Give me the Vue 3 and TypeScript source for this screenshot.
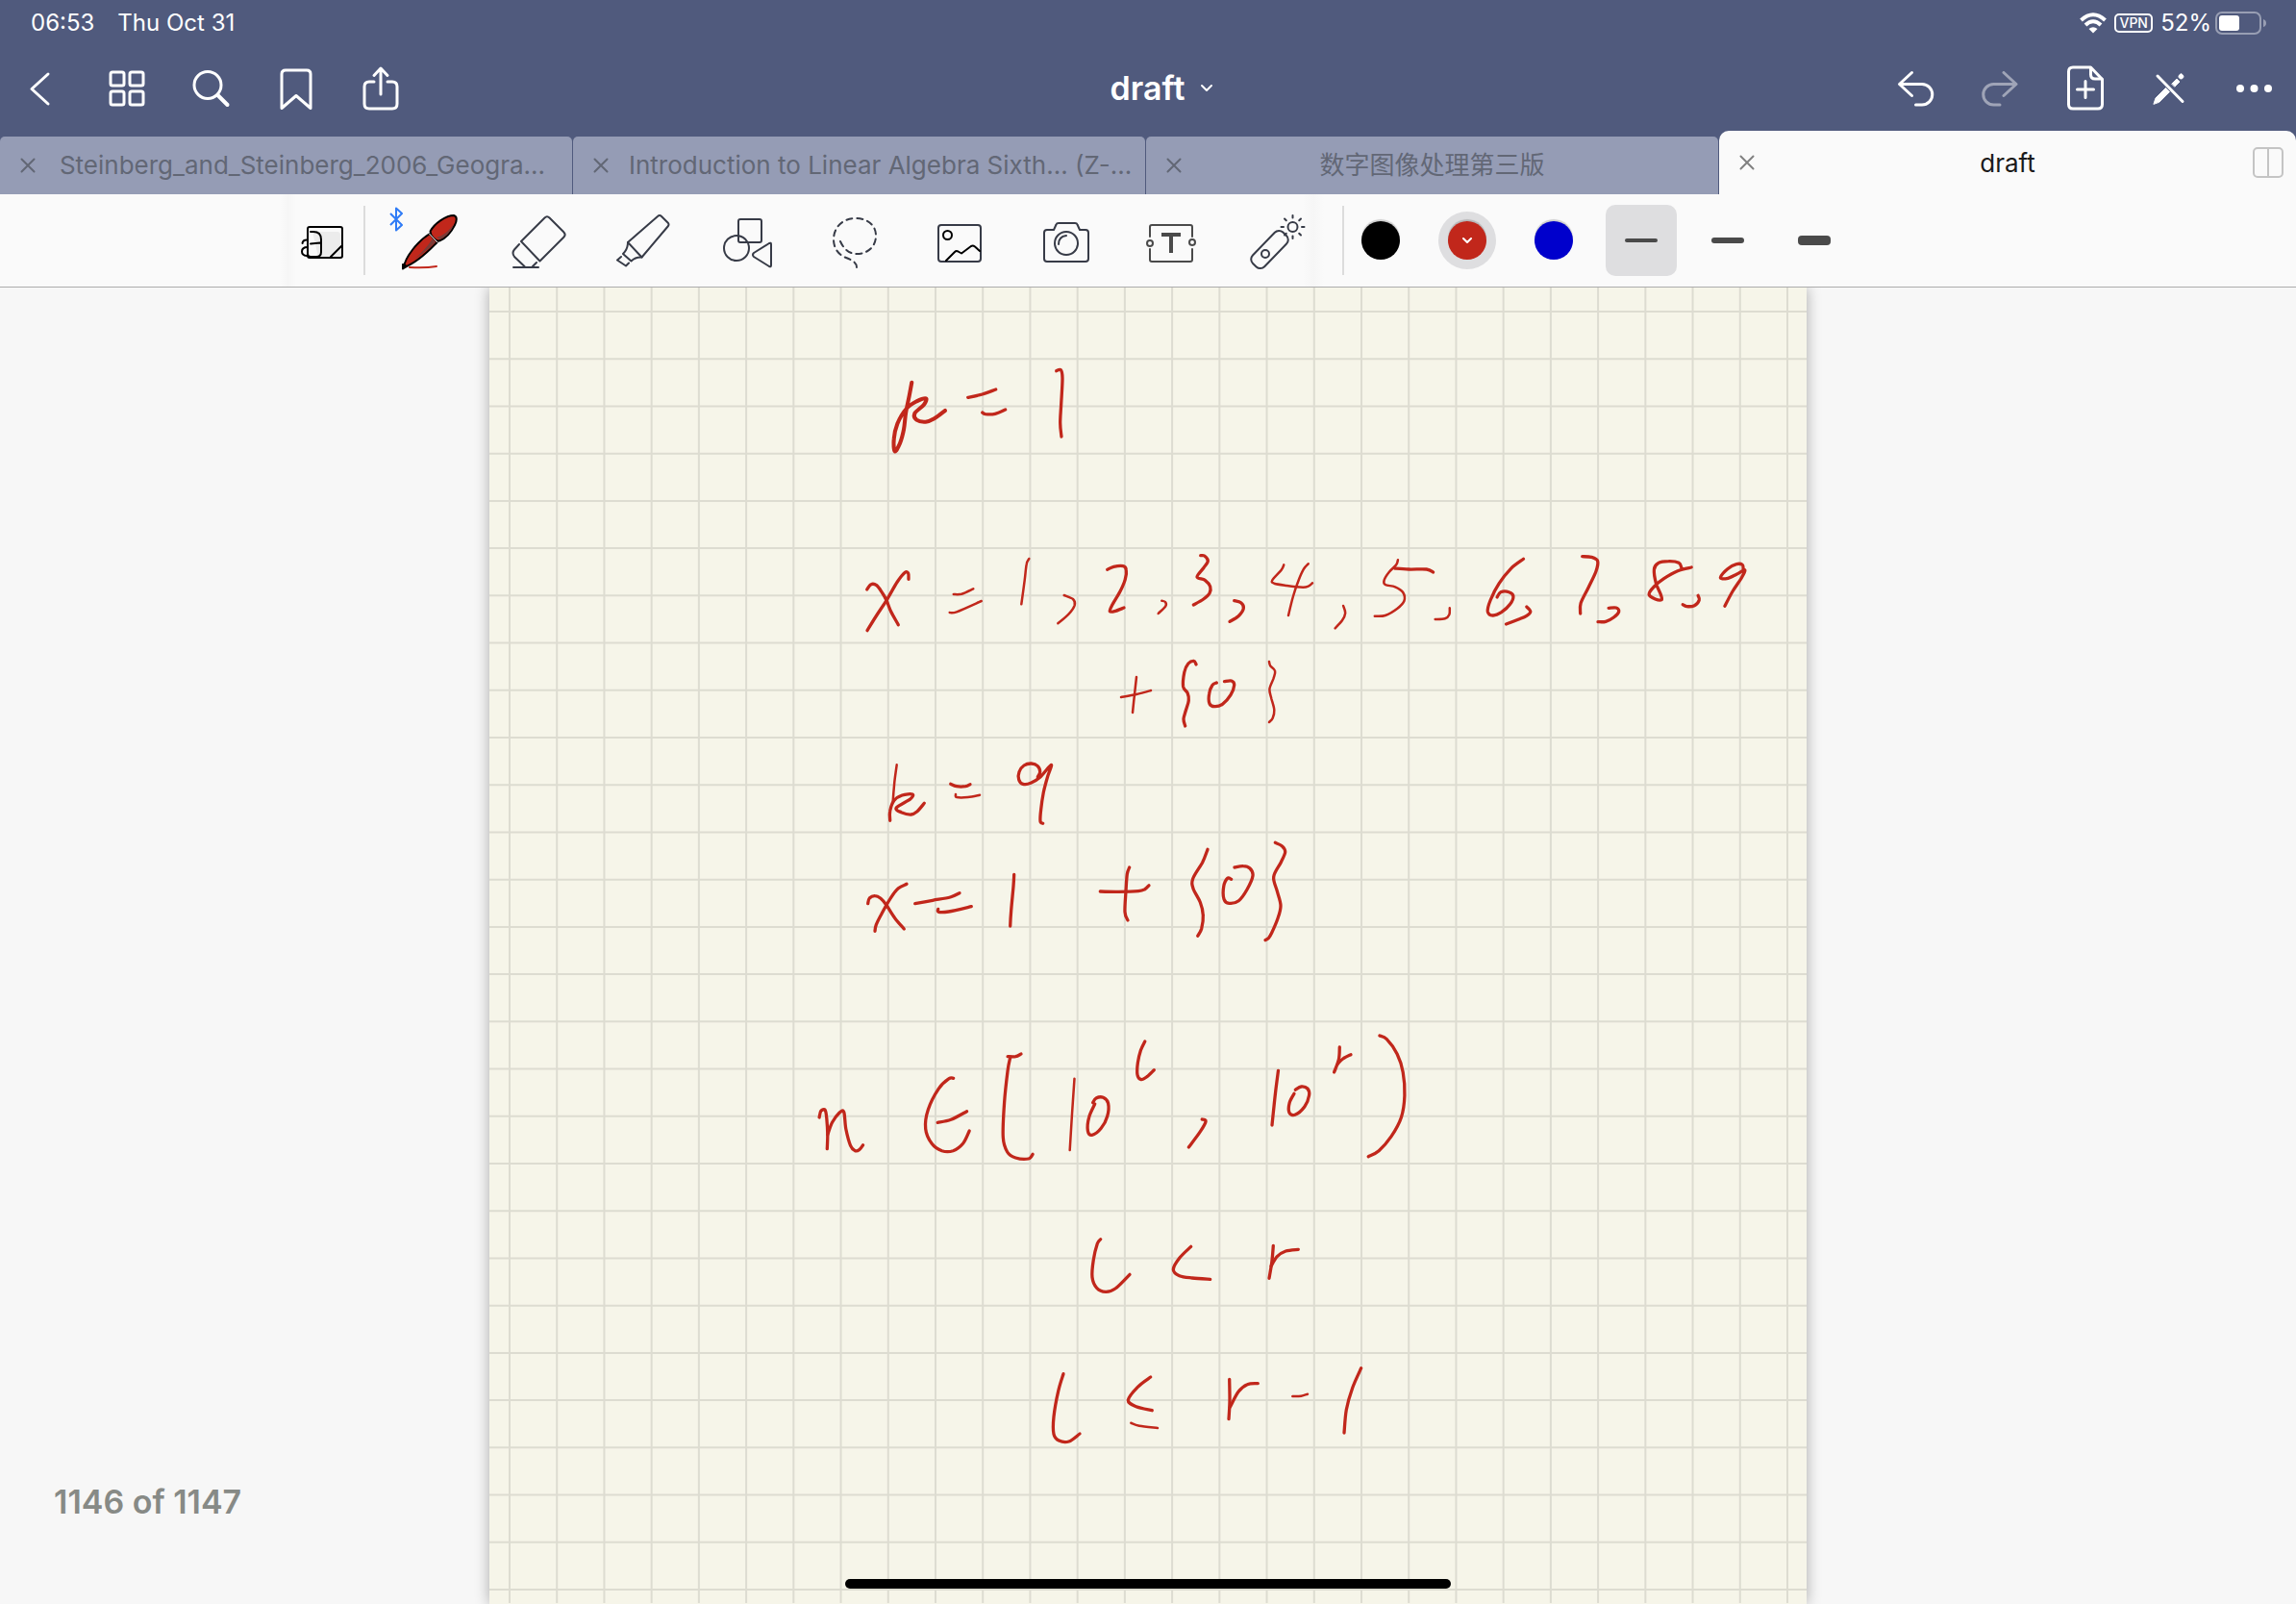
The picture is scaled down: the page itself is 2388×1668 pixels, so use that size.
<script setup lang="ts">
interface Tab {
  title: string
  active?: boolean
  long?: boolean
}

interface InkLine {
  label: string
  // origin of the line on the sheet, and samples per pixel on each axis
  x: number
  y: number
  sx: number
  sy: number
  // every stroke: pen pressure, then x and y of each sample
  strokes: number[][]
}

const tabs: Tab[] = [
  { title: 'Steinberg_and_Steinberg_2006_Geogra...', long: true },
  { title: 'Introduction to Linear Algebra Sixth... (Z-...', long: true },
  { title: '数字图像处理第三版' },
  { title: 'draft', active: true },
]

const colors = [
  { name: 'Black', value: '#000000', selected: false },
  { name: 'Red', value: '#c1271b', selected: true },
  { name: 'Blue', value: '#0000cc', selected: false },
]

const widths = [
  { name: 'Thin', px: 4, selected: true },
  { name: 'Medium', px: 6, selected: false },
  { name: 'Thick', px: 10, selected: false },
]

const rays = [0, 45, 90, 135, 180, 225, 270, 315]

const pitch = 443 / 9
const gridX = Array.from({ length: 28 }, (_, i) => 21 + i * pitch)
const gridY = Array.from({ length: 28 }, (_, i) => 25 + i * pitch)

const ink: InkLine[] = [
  {
    label: 'k = 1, x = 1, 2, 3, 4', x: 371, y: 51, sx: 3, sy: 3,
    strokes: [
      [4, 205, 143, 197, 185, 186, 240, 180, 290, 168, 333, 152, 358, 149, 320, 160, 272, 188, 225, 220, 202, 249, 193, 243, 212, 214, 240, 220, 260, 248, 266, 275, 256, 309, 231],
      [3, 380, 190, 425, 180, 467, 165],
      [3, 425, 237, 435, 242, 465, 241, 497, 228],
      [3, 656, 107, 670, 104, 675, 130, 671, 210, 668, 270, 672, 312],
      [3, 65, 789, 78, 773, 95, 776, 112, 798, 126, 823, 140, 858, 163, 899],
      [3, 66, 917, 95, 870, 126, 823, 160, 765, 184, 736, 194, 739, 195, 757],
      [2, 335, 804, 360, 803, 397, 787],
      [2, 323, 861, 345, 859, 422, 825],
      [2, 571, 693, 563, 710, 557, 760, 547, 835],
      [2, 680, 807, 708, 819, 713, 838, 695, 865, 661, 895],
      [3, 815, 727, 835, 718, 865, 716, 874, 728, 871, 757, 855, 795, 830, 838, 823, 857, 838, 857, 867, 846],
      [2, 985, 824, 996, 828, 997, 841, 974, 864],
      [3, 1106, 683, 1118, 684, 1129, 700, 1115, 722, 1095, 750, 1120, 760, 1136, 780, 1134, 801, 1115, 819, 1084, 837],
      [3, 1211, 824, 1232, 830, 1240, 848, 1224, 872, 1197, 889],
      [2, 1366, 712, 1358, 728, 1330, 760, 1336, 770, 1375, 777, 1425, 782, 1442, 779, 1455, 769],
      [2, 1442, 709, 1428, 725, 1412, 760, 1395, 810, 1380, 870],
    ],
  },
  {
    label: ', 5, 6, 7, 8, 9 {0}', x: 691, y: 251, sx: 2.45, sy: 3,
    strokes: [
      [2, 483, 240, 488, 263, 480, 286, 462, 310],
      [2, 622, 97, 618, 112, 600, 134, 587, 160, 590, 174, 615, 181, 635, 198, 638, 225, 620, 249, 590, 270, 563, 272],
      [3, 614, 123, 650, 126, 695, 126, 712, 135],
      [2, 754, 247, 753, 268, 742, 280, 717, 282],
      [3, 942, 94, 910, 124, 880, 170, 858, 222, 851, 258, 864, 270, 886, 260, 908, 235, 916, 210, 905, 197, 884, 197, 875, 213],
      [3, 950, 243, 960, 258, 950, 271, 930, 282, 898, 297],
      [3, 1092, 86, 1115, 88, 1131, 100, 1127, 132, 1108, 182, 1088, 232, 1087, 264],
      [3, 1159, 247, 1178, 246, 1185, 258, 1172, 276, 1152, 289, 1132, 290],
      [3, 1345, 122, 1338, 106, 1312, 101, 1285, 107, 1275, 127, 1280, 170, 1292, 205, 1294, 221, 1278, 219, 1262, 204, 1275, 180, 1300, 155, 1335, 131, 1370, 120],
      [3, 1387, 208, 1390, 222, 1378, 239, 1358, 242, 1348, 236],
      [3, 1502, 125, 1500, 112, 1485, 110, 1462, 125, 1444, 151, 1460, 155, 1485, 142, 1506, 128, 1498, 152, 1475, 195, 1455, 241],
      [3, 108, 423, 102, 412, 88, 420, 78, 447, 75, 492, 86, 512, 89, 535, 82, 565, 76, 593, 80, 615],
      [3, 160, 480, 149, 488, 141, 515, 142, 545, 155, 554, 175, 547, 196, 518, 205, 487, 198, 474, 180, 476],
      [2, 294, 414, 297, 427, 309, 443, 305, 467, 295, 500, 300, 530, 307, 565, 303, 590, 294, 603],
    ],
  },
  {
    label: '+', x: -509, y: -299, sx: 1, sy: 1,
    strokes: [
      [2, 1166, 725, 1182, 722, 1197, 718],
      [2, 1182, 704, 1180, 722, 1178, 741],
    ],
  },
  {
    label: 'k = 9, x = 1 + {0}', x: 371, y: 451, sx: 3, sy: 3,
    strokes: [
      [2, 158, 136, 151, 190, 146, 250],
      [3, 137, 310, 137, 280, 150, 247, 175, 231, 207, 228, 200, 243, 157, 270, 172, 284, 203, 291, 222, 281, 244, 256],
      [3, 326, 196, 345, 203, 373, 203, 387, 197],
      [2, 342, 228, 345, 237, 380, 237, 417, 230],
      [3, 598, 174, 605, 158, 598, 140, 578, 132, 555, 138, 540, 158, 539, 182, 552, 196, 576, 193, 605, 175, 640, 136, 629, 172, 616, 222, 608, 275, 606, 312, 614, 319],
      [3, 68, 569, 73, 552, 90, 545, 108, 553, 126, 574, 152, 614, 181, 648],
      [3, 90, 655, 94, 635, 110, 602, 140, 550, 163, 521, 189, 508],
      [3, 215, 569, 270, 559, 325, 549, 354, 536],
      [3, 287, 586, 289, 595, 320, 594, 391, 578],
      [3, 524, 478, 522, 515, 515, 590, 512, 639],
      [3, 793, 531, 850, 532, 912, 530, 932, 524, 945, 512],
      [3, 884, 456, 877, 477, 873, 530, 870, 595, 879, 621],
      [3, 1128, 400, 1112, 440, 1082, 491, 1083, 522, 1105, 565, 1114, 605, 1109, 647, 1097, 670],
      [3, 1202, 493, 1190, 490, 1178, 516, 1179, 555, 1195, 568, 1225, 560, 1251, 525, 1269, 482, 1260, 459, 1239, 452, 1212, 456],
      [3, 1339, 379, 1360, 389, 1370, 408, 1357, 440, 1334, 485, 1345, 530, 1356, 575, 1347, 615, 1328, 660, 1318, 677, 1308, 683],
    ],
  },
  {
    label: 'n ∈ [10^l, 10^r)', x: 311, y: 751, sx: 2.306, sy: 3,
    strokes: [
      [3, 74, 336, 78, 316, 88, 313, 92, 342, 94, 390, 93, 434],
      [3, 94, 390, 105, 352, 122, 322, 133, 319, 138, 372, 149, 424, 160, 440, 170, 437, 179, 422],
      [3, 396, 214, 385, 215, 360, 247, 335, 312, 329, 372, 344, 418, 368, 440, 395, 440, 419, 417, 434, 378],
      [3, 358, 352, 390, 343, 428, 317],
      [3, 526, 146, 545, 146, 558, 138],
      [3, 532, 149, 526, 190, 518, 290, 515, 398, 525, 444, 545, 462, 576, 465, 586, 451],
      [2, 686, 215, 680, 330, 675, 438],
      [3, 730, 290, 738, 276, 755, 274, 767, 292, 765, 332, 750, 370, 728, 391, 718, 378, 721, 335, 735, 294],
      [3, 855, 99, 845, 127, 838, 165, 837, 203, 846, 218, 860, 209, 877, 188],
      [3, 992, 342, 1001, 348, 988, 380, 960, 429],
      [3, 1175, 190, 1168, 260, 1160, 360],
      [3, 1216, 250, 1230, 240, 1245, 246, 1249, 267, 1238, 302, 1215, 328, 1201, 320, 1202, 290, 1213, 262],
      [3, 1322, 117, 1320, 155, 1309, 195],
      [3, 1318, 168, 1330, 153, 1349, 140],
      [3, 1418, 81, 1435, 92, 1460, 138, 1474, 195, 1478, 268, 1470, 335, 1446, 395, 1416, 440, 1391, 458],
    ],
  },
  {
    label: 'l < r, l ≤ r - 1', x: 541, y: 951, sx: 3, sy: 3,
    strokes: [
      [3, 284, 116, 274, 130, 262, 180, 258, 235, 272, 268, 300, 280, 330, 270, 375, 226],
      [3, 566, 139, 530, 175, 511, 211, 530, 230, 570, 237, 626, 241],
      [3, 823, 136, 818, 190, 810, 238],
      [3, 816, 200, 835, 170, 862, 153, 901, 148],
      [3, 168, 536, 152, 590, 138, 670, 138, 724, 154, 744, 185, 747, 219, 723],
      [3, 440, 546, 400, 577, 370, 618, 395, 638, 445, 650],
      [2, 379, 689, 405, 698, 462, 705],
      [3, 686, 553, 687, 620, 684, 677],
      [3, 688, 640, 714, 592, 742, 569, 775, 566],
      [2, 883, 606, 910, 605, 930, 599],
      [3, 1097, 518, 1070, 580, 1051, 648, 1044, 720],
    ],
  },
]

// Pen pressure to line width.
const penWidth = (pressure: number) => (0.9 + pressure * 0.8).toFixed(1)

// Smooths the pen samples of a stroke with a Catmull-Rom spline.
function strokePath(line: InkLine, stroke: number[]): string {
  const pts: [number, number][] = []
  for (let i = 1; i < stroke.length; i += 2) {
    pts.push([line.x + stroke[i] / line.sx, line.y + stroke[i + 1] / line.sy])
  }
  const f = (n: number) => n.toFixed(1)
  let d = `M${f(pts[0][0])} ${f(pts[0][1])}`
  for (let i = 0; i < pts.length - 1; i++) {
    const a = pts[Math.max(i - 1, 0)]
    const b = pts[i]
    const c = pts[i + 1]
    const e = pts[Math.min(i + 2, pts.length - 1)]
    d += `C${f(b[0] + (c[0] - a[0]) / 6)} ${f(b[1] + (c[1] - a[1]) / 6)} `
    d += `${f(c[0] - (e[0] - b[0]) / 6)} ${f(c[1] - (e[1] - b[1]) / 6)} ${f(c[0])} ${f(c[1])}`
  }
  return d
}
</script>

<template>
  <div class="app">
    <header class="header">
      <div class="status">
        <span>06:53</span>
        <span class="date">Thu Oct 31</span>
        <svg class="wifi" width="28" height="22" viewBox="0 0 28 22" fill="none" stroke="#fff" stroke-width="4">
          <path d="M1.5 8 Q14 -3.500 26.500 8" />
          <path d="M6 13 Q14 5.500 22 13" />
          <path d="M14 21.500 L9.500 17 Q14 13.500 18.500 17 Z" fill="#fff" stroke="none" />
        </svg>
        <span class="vpn">VPN</span>
        <span class="percent">52%</span>
        <svg width="54" height="24" viewBox="0 0 54 24">
          <rect x="1" y="1" width="46" height="22" rx="6" fill="none" stroke="#989eb3" stroke-width="2" />
          <rect x="4" y="4" width="21" height="16" rx="3" fill="#fff" />
          <path d="M50 8 Q53 9 53 12 Q53 15 50 16 Z" fill="#989eb3" />
        </svg>
      </div>

      <nav class="nav">
        <div class="group">
          <button type="button" aria-label="Back">
            <svg class="icon" viewBox="0 0 48 48"><path d="M30 9 L13 24.500 L30 40" /></svg>
          </button>
          <button type="button" aria-label="Thumbnails">
            <svg class="icon" viewBox="0 0 48 48">
              <rect x="7" y="7" width="14" height="14" rx="2" />
              <rect x="27" y="7" width="14" height="14" rx="2" />
              <rect x="7" y="27" width="14" height="14" rx="2" />
              <rect x="27" y="27" width="14" height="14" rx="2" />
            </svg>
          </button>
          <button type="button" aria-label="Search">
            <svg class="icon" viewBox="0 0 48 48"><circle cx="20" cy="20.500" r="14" /><path d="M30.500 31 L40.500 41" style="stroke-width: 4px" /></svg>
          </button>
          <button type="button" aria-label="Bookmark">
            <svg class="icon" viewBox="0 0 48 48"><path d="M9 44.500 V9 Q9 5 13 5 H35 Q39 5 39 9 V44.500 L24 31.500 Z" /></svg>
          </button>
          <button type="button" aria-label="Share">
            <svg class="icon" viewBox="0 0 48 48">
              <path d="M17 17 H12 Q7 17 7 22 V40 Q7 45 12 45 H36 Q41 45 41 40 V22 Q41 17 36 17 H31" />
              <path d="M24 30 V3.500 M17 10.500 L24 3 L31 10.500" />
            </svg>
          </button>
        </div>

        <button type="button" class="title">
          <span>draft</span>
          <svg width="14" height="10" viewBox="0 0 14 10" fill="none" stroke="#fff" stroke-width="2" stroke-linecap="round" stroke-linejoin="round"><path d="M2 2 L7 7 L12 2" /></svg>
        </button>

        <div class="group">
          <button type="button" aria-label="Undo">
            <svg class="icon" viewBox="0 0 48 48"><path d="M20.500 7.500 L7.500 19.500 L20.500 31.500 M8 19.500 H31 A10.700 10.700 0 0 1 31 41 H24.500" /></svg>
          </button>
          <button type="button" aria-label="Redo" disabled>
            <svg class="icon faded" viewBox="0 0 48 48"><path d="M28 7.500 L41 19.500 L28 31.500 M40.500 19.500 H17.500 A10.700 10.700 0 0 0 17.500 41 H24" /></svg>
          </button>
          <button type="button" aria-label="Add page">
            <svg class="icon" viewBox="0 0 48 48">
              <path d="M30.500 2 H12 Q7.500 2 7.500 6.500 V40.500 Q7.500 45 12 45 H38 Q42.500 45 42.500 40.500 V14.500 Z" />
              <path d="M30.500 2.500 V9.500 Q30.500 14 35 14 H42 M25 16.500 V33.500 M16.500 25 H33.500" />
            </svg>
          </button>
          <button type="button" aria-label="Read only mode">
            <svg class="icon" viewBox="0 0 48 48">
              <path d="M12 11 L38 37.500" />
              <path d="M8 40 L10 34 L20.500 23.500 L24.500 27.500 L14 38 Z M27 19 L32 14 L35 17 L30 22 Z M36.500 9 A2.500 2.500 0 1 1 36.400 9 Z" style="fill: #fff; stroke-width: 1px" />
            </svg>
          </button>
          <button type="button" aria-label="More">
            <svg class="icon" viewBox="0 0 48 48"><g fill="#fff" stroke="none"><circle cx="10" cy="24" r="4" /><circle cx="24.500" cy="24" r="4" /><circle cx="39" cy="24" r="4" /></g></svg>
          </button>
        </div>
      </nav>

      <div class="tabs" role="tablist">
        <div v-for="tab in tabs" :key="tab.title" class="tab" :class="{ active: tab.active, long: tab.long }" role="tab" :aria-selected="!!tab.active">
          <button type="button" class="close" :aria-label="`Close ${tab.title}`">
            <svg width="16" height="16" viewBox="0 0 16 16" fill="none" stroke="currentColor" stroke-width="2" stroke-linecap="round"><path d="M1.500 1.500 L14.500 14.500 M14.500 1.500 L1.500 14.500" /></svg>
          </button>
          <span class="label">{{ tab.title }}</span>
          <button v-if="tab.active" type="button" class="split" aria-label="Split view">
            <svg width="32" height="32" viewBox="0 0 32 32" fill="none" stroke="#c4c4c4" stroke-width="2"><rect x="1" y="1" width="30" height="30" rx="4" /><path d="M16 1 V31" /></svg>
          </button>
        </div>
      </div>
    </header>

    <div class="toolbar" role="toolbar" aria-label="Tools">
      <div class="strip">
        <button type="button" class="page-mode" aria-label="Zoom window">
          <svg width="48" height="48" viewBox="0 0 48 48" fill="none" stroke="#000" stroke-width="2" stroke-linecap="round">
            <path d="M14 15 H41 L44 18 V41 H20 Z" fill="#ececec" stroke="none" />
            <rect x="9" y="10" width="36" height="32" rx="2" />
            <path d="M12 15 H15 Q23 15 23 23 V36 Q23 41 18 41 H12 Q9 41 9 38 M12 27.500 L22 26.500 M33 41 L44 30" />
            <path d="M3.500 27 Q4 23.500 8 23.500 M9 31 Q3 31 3 35.500 Q3 39.500 8 40" />
          </svg>
        </button>
        <span class="divider"></span>

        <button type="button" class="tool" aria-label="Pen">
          <svg class="badge" width="14" height="26" viewBox="0 0 14 26" fill="none" stroke="#2f7bf6" stroke-width="2" stroke-linejoin="round"><path d="M1 7 L13 19 L7 24.500 V1.500 L13 7 L1 19" /></svg>
          <svg class="glyph" viewBox="0 0 64 64">
            <g fill="#c1271b" stroke="#000">
              <path d="M4 60 C5 50 18 33 31 25 L39 33.500 C30 43 16 56 4 60 Z" />
              <path d="M31.500 22.500 C36 14 48 6 56 6 C60 7 59 12 57 16 C53 24 47 30 41 32.500 C37 33 31.500 27 31.500 22.500 Z" />
            </g>
            <path d="M14 52 C24 46 31 40 37 33.500 L34 30 C29 38 22 46 14 52 Z M42 31 C48 28 54 22 56 15 C51 22 45 27 38 29 Z" fill="#7a3b37" stroke="none" />
            <path d="M30.500 25 L39 34" stroke="#fff" stroke-width="1" />
            <path d="M3 57 L7 59 L3 61.500 Z" fill="#000" stroke="#000" />
            <path d="M10 60 Q26 61 38 59" stroke="#c1271b" stroke-width="2" />
          </svg>
        </button>
        <button type="button" class="tool" aria-label="Eraser">
          <svg class="glyph" viewBox="0 0 64 64">
            <path d="M16 33 L40.500 8.500 Q43 6 45.500 8.500 L60 23 Q63 26 60.500 28.500 L35.500 53.500 Z" />
            <path d="M14 36 L9 41.500 Q6 45 9 49 L19.500 59 M28 59 L32 55 M8 60 H34" />
          </svg>
        </button>
        <button type="button" class="tool" aria-label="Highlighter">
          <svg class="glyph" viewBox="0 0 64 64">
            <path d="M17 34 L48 7 Q50 5 52 7 L59 14 Q60 15.500 59 17 L31.500 49.500 Z" />
            <path d="M17 34 Q17 41 12 46 L20.500 53.500 Q25 49 31.500 49.500 M10 49 L6 52.500 L15 58.500 L18 55.500" />
          </svg>
        </button>
        <button type="button" class="tool" aria-label="Shapes">
          <svg class="glyph" viewBox="0 0 64 64">
            <rect x="22" y="10" width="24" height="24" rx="2" /><circle cx="20" cy="40" r="13" />
            <path d="M38 45 L54 35 Q56 34 56 36 V58 Q56 60 54 59 L38 49 Q36 47 38 45 Z" />
          </svg>
        </button>
        <button type="button" class="tool" aria-label="Lasso">
          <svg class="glyph" viewBox="0 0 64 64"><path d="M18 33 C22 42 28 46 35 46 C47 46 55 38 55 27 C55 16 46 9 34 9 C20 9 11 19 11 31 C11 40 16 47 24 50 C31 53 35 55 35 60" stroke-dasharray="6 5" /></svg>
        </button>
        <button type="button" class="tool" aria-label="Image">
          <svg class="glyph" viewBox="0 0 64 64">
            <rect x="10" y="16" width="44" height="38" rx="3" />
            <g stroke="#000"><circle cx="19.500" cy="26.500" r="4.500" /><path d="M18 53 L27 44 Q28.500 42.500 30.500 43.500 L34 45.500 L44 38 Q46 37 48 38.500 L53 43" /></g>
          </svg>
        </button>
        <button type="button" class="tool" aria-label="Camera">
          <svg class="glyph" viewBox="0 0 64 64">
            <path d="M13 21 H20 L22.500 15.500 Q23 14 25 14 H42 Q44 14 44.500 15.500 L47 21 H53 Q56 21 56 24 V51 Q56 54 53 54 H13 Q10 54 10 51 V24 Q10 21 13 21 Z" />
            <circle cx="33" cy="35" r="12" /><path d="M25 36 Q25 28 33 27" />
          </svg>
        </button>
        <button type="button" class="tool" aria-label="Text">
          <svg class="glyph gray" viewBox="0 0 64 64">
            <path d="M10 28 V18 Q10 16 12 16 H52 Q54 16 54 18 V28 M54 41 V52 Q54 54 52 54 H12 Q10 54 10 52 V41" />
            <circle cx="10" cy="35" r="3" /><circle cx="54" cy="34" r="3" />
            <path d="M22 26 H42 M32 26 V45" stroke-width="4" stroke-linecap="butt" />
          </svg>
        </button>
        <button type="button" class="tool" aria-label="Laser pointer">
          <svg class="glyph" viewBox="0 0 64 64">
            <rect x="2" y="33" width="45" height="17" rx="6" transform="rotate(-46 24.500 41.500)" />
            <circle cx="20" cy="46" r="4" /><circle cx="48.500" cy="18" r="5" />
            <path v-for="r in rays" :key="r" d="M48.500 8.500 V6" :transform="`rotate(${r} 48.500 18)`" />
          </svg>
        </button>
      </div>

      <span class="divider second"></span>
      <div class="swatches">
        <button v-for="c in colors" :key="c.name" type="button" class="swatch" :class="{ selected: c.selected }" :aria-label="c.name" :aria-pressed="c.selected">
          <span class="dot" :style="{ background: c.value }">
            <svg v-if="c.selected" width="12" height="8" viewBox="0 0 12 8" fill="none" stroke="#fff" stroke-width="2" stroke-linecap="round" stroke-linejoin="round"><path d="M2 2 L6 6 L10 2" /></svg>
          </span>
        </button>
      </div>
      <div class="widths">
        <button v-for="w in widths" :key="w.name" type="button" class="width" :class="{ selected: w.selected }" :aria-label="w.name" :aria-pressed="w.selected">
          <span class="bar" :style="{ height: `${w.px}px` }"></span>
        </button>
      </div>
    </div>

    <main class="canvas">
      <div class="sheet">
        <svg viewBox="0 0 1370 1368" role="img" aria-label="Handwritten notes">
          <g stroke="#dddcd1" stroke-width="2">
            <line v-for="x in gridX" :key="`x${x}`" :x1="x" y1="0" :x2="x" y2="1368" />
            <line v-for="y in gridY" :key="`y${y}`" x1="0" :y1="y" x2="1370" :y2="y" />
          </g>
          <g v-for="line in ink" :key="line.label" class="ink" :aria-label="line.label">
            <path v-for="(s, i) in line.strokes" :key="i" :d="strokePath(line, s)" :stroke-width="penWidth(s[0])" />
          </g>
        </svg>
      </div>
      <p class="counter">1146 of 1147</p>
      <div class="home"></div>
    </main>
  </div>
</template>

<style>
body {
  margin: 0;
}
</style>

<style scoped>
.app {
  display: flex;
  flex-direction: column;
  min-height: 100vh;
  background: #f7f7f7;
  font-family: Inter, "Noto Sans CJK SC", sans-serif;
}

button {
  display: flex;
  align-items: center;
  justify-content: center;
  margin: 0;
  padding: 0;
  border: 0;
  background: none;
  color: inherit;
  font: inherit;
}

svg {
  display: block;
  flex-shrink: 0;
}

.header {
  background: #505a7d;
  color: #fff;
}

.status {
  display: flex;
  align-items: center;
  height: 48px;
  padding: 0 30px 0 32px;
  font-size: 24px;
  line-height: 48px;
}

.date {
  margin-left: 24px;
}

.wifi {
  margin-left: auto;
}

.vpn {
  box-sizing: border-box;
  width: 40px;
  height: 20px;
  margin: 0 8px;
  border: 2px solid #fff;
  border-radius: 5px;
  font-size: 14px;
  font-weight: 500;
  line-height: 16px;
  text-align: center;
}

.percent {
  margin-right: 4px;
}

.nav {
  display: flex;
  align-items: center;
  justify-content: space-between;
  height: 88px;
}

.group {
  display: flex;
}

.group button {
  width: 88px;
  height: 88px;
}

.icon {
  width: 48px;
  height: 48px;
  fill: none;
  stroke: #fff;
  stroke-width: 3px;
  stroke-linecap: round;
  stroke-linejoin: round;
}

.faded {
  opacity: 0.45;
}

.title {
  gap: 16px;
  padding-left: 29px;
  font-size: 34px;
  font-weight: 600;
  line-height: 40px;
}

.tabs {
  display: flex;
  align-items: flex-end;
  gap: 1px;
  height: 66px;
}

.tab {
  display: flex;
  flex: 595 1 0;
  align-items: center;
  min-width: 0;
  height: 60px;
  border-radius: 5px 5px 0 0;
  background: #959cb5;
  color: #626775;
  font-size: 26px;
  line-height: 36px;
}

.tab.active {
  flex-grow: 600;
  height: 66px;
  border-radius: 10px 10px 0 0;
  background: #fafafa;
  color: #1a1a1a;
}

.close {
  flex: 0 0 58px;
  height: 60px;
}

.active .close {
  color: #808080;
}

.label {
  flex: 1;
  min-width: 0;
  padding-right: 58px;
  overflow: hidden;
  text-align: center;
  white-space: nowrap;
}

.long .label {
  padding-right: 24px;
}

.active .label {
  padding: 2px 13px 0 0;
}

.split {
  padding-right: 13px;
}

.toolbar {
  display: flex;
  align-items: center;
  box-sizing: border-box;
  height: 97px;
  padding-left: 292px;
  border-bottom: 1px solid #acacac;
  background: #fafafa;
}

.strip {
  display: flex;
  align-items: center;
  padding-left: 12px;
  background: linear-gradient(90deg, #fafafa, #f6f6f6 8px, #fafafa 16px, #fafafa calc(100% - 28px), #f6f6f6 calc(100% - 17px), #fafafa calc(100% - 6px));
}

.page-mode {
  width: 62px;
  height: 96px;
}

.divider {
  width: 2px;
  height: 72px;
  margin: 0 13px 0 12px;
  background: #dcdcdc;
}

.divider.second {
  margin: 0 8px 0 13px;
}

.tool {
  position: relative;
  width: 110px;
  height: 96px;
}

.glyph {
  width: 64px;
  height: 64px;
  fill: none;
  stroke: #373b47;
  stroke-width: 2px;
  stroke-linecap: round;
  stroke-linejoin: round;
}

.gray {
  stroke: #4a4a4a;
}

.badge {
  position: absolute;
  top: 13px;
  left: 12px;
}

.swatches {
  display: flex;
  gap: 30px;
}

.swatch {
  width: 60px;
  height: 60px;
  border-radius: 50%;
}

.selected {
  background: #dedee0;
}

.dot {
  display: flex;
  align-items: center;
  justify-content: center;
  width: 40px;
  height: 40px;
  border-radius: 50%;
  box-shadow: 0 -2px 1px rgba(0, 0, 0, 0.18);
}

.widths {
  display: flex;
  gap: 16px;
  margin-left: 24px;
}

.width {
  width: 74px;
  height: 74px;
  border-radius: 10px;
}

.bar {
  width: 34px;
  border-radius: 4px;
  background: #4a4a4a;
}

.canvas {
  position: relative;
  display: flex;
  flex: 1;
  justify-content: center;
  overflow: hidden;
}

.sheet {
  flex: 0 1 1370px;
  background: #f6f5e9;
  box-shadow: 0 0 14px rgba(0, 0, 0, 0.32);
}

.sheet svg {
  width: 100%;
}

.ink path {
  fill: none;
  stroke: #c1271b;
  stroke-linecap: round;
  stroke-linejoin: round;
}

.counter {
  position: absolute;
  bottom: 86px;
  left: 56px;
  margin: 0;
  color: #878a86;
  font-size: 34px;
  font-weight: 600;
  line-height: 40px;
}

.home {
  position: absolute;
  bottom: 16px;
  left: 50%;
  width: 630px;
  height: 10px;
  margin-left: -315px;
  border-radius: 5px;
  background: #000;
}
</style>
